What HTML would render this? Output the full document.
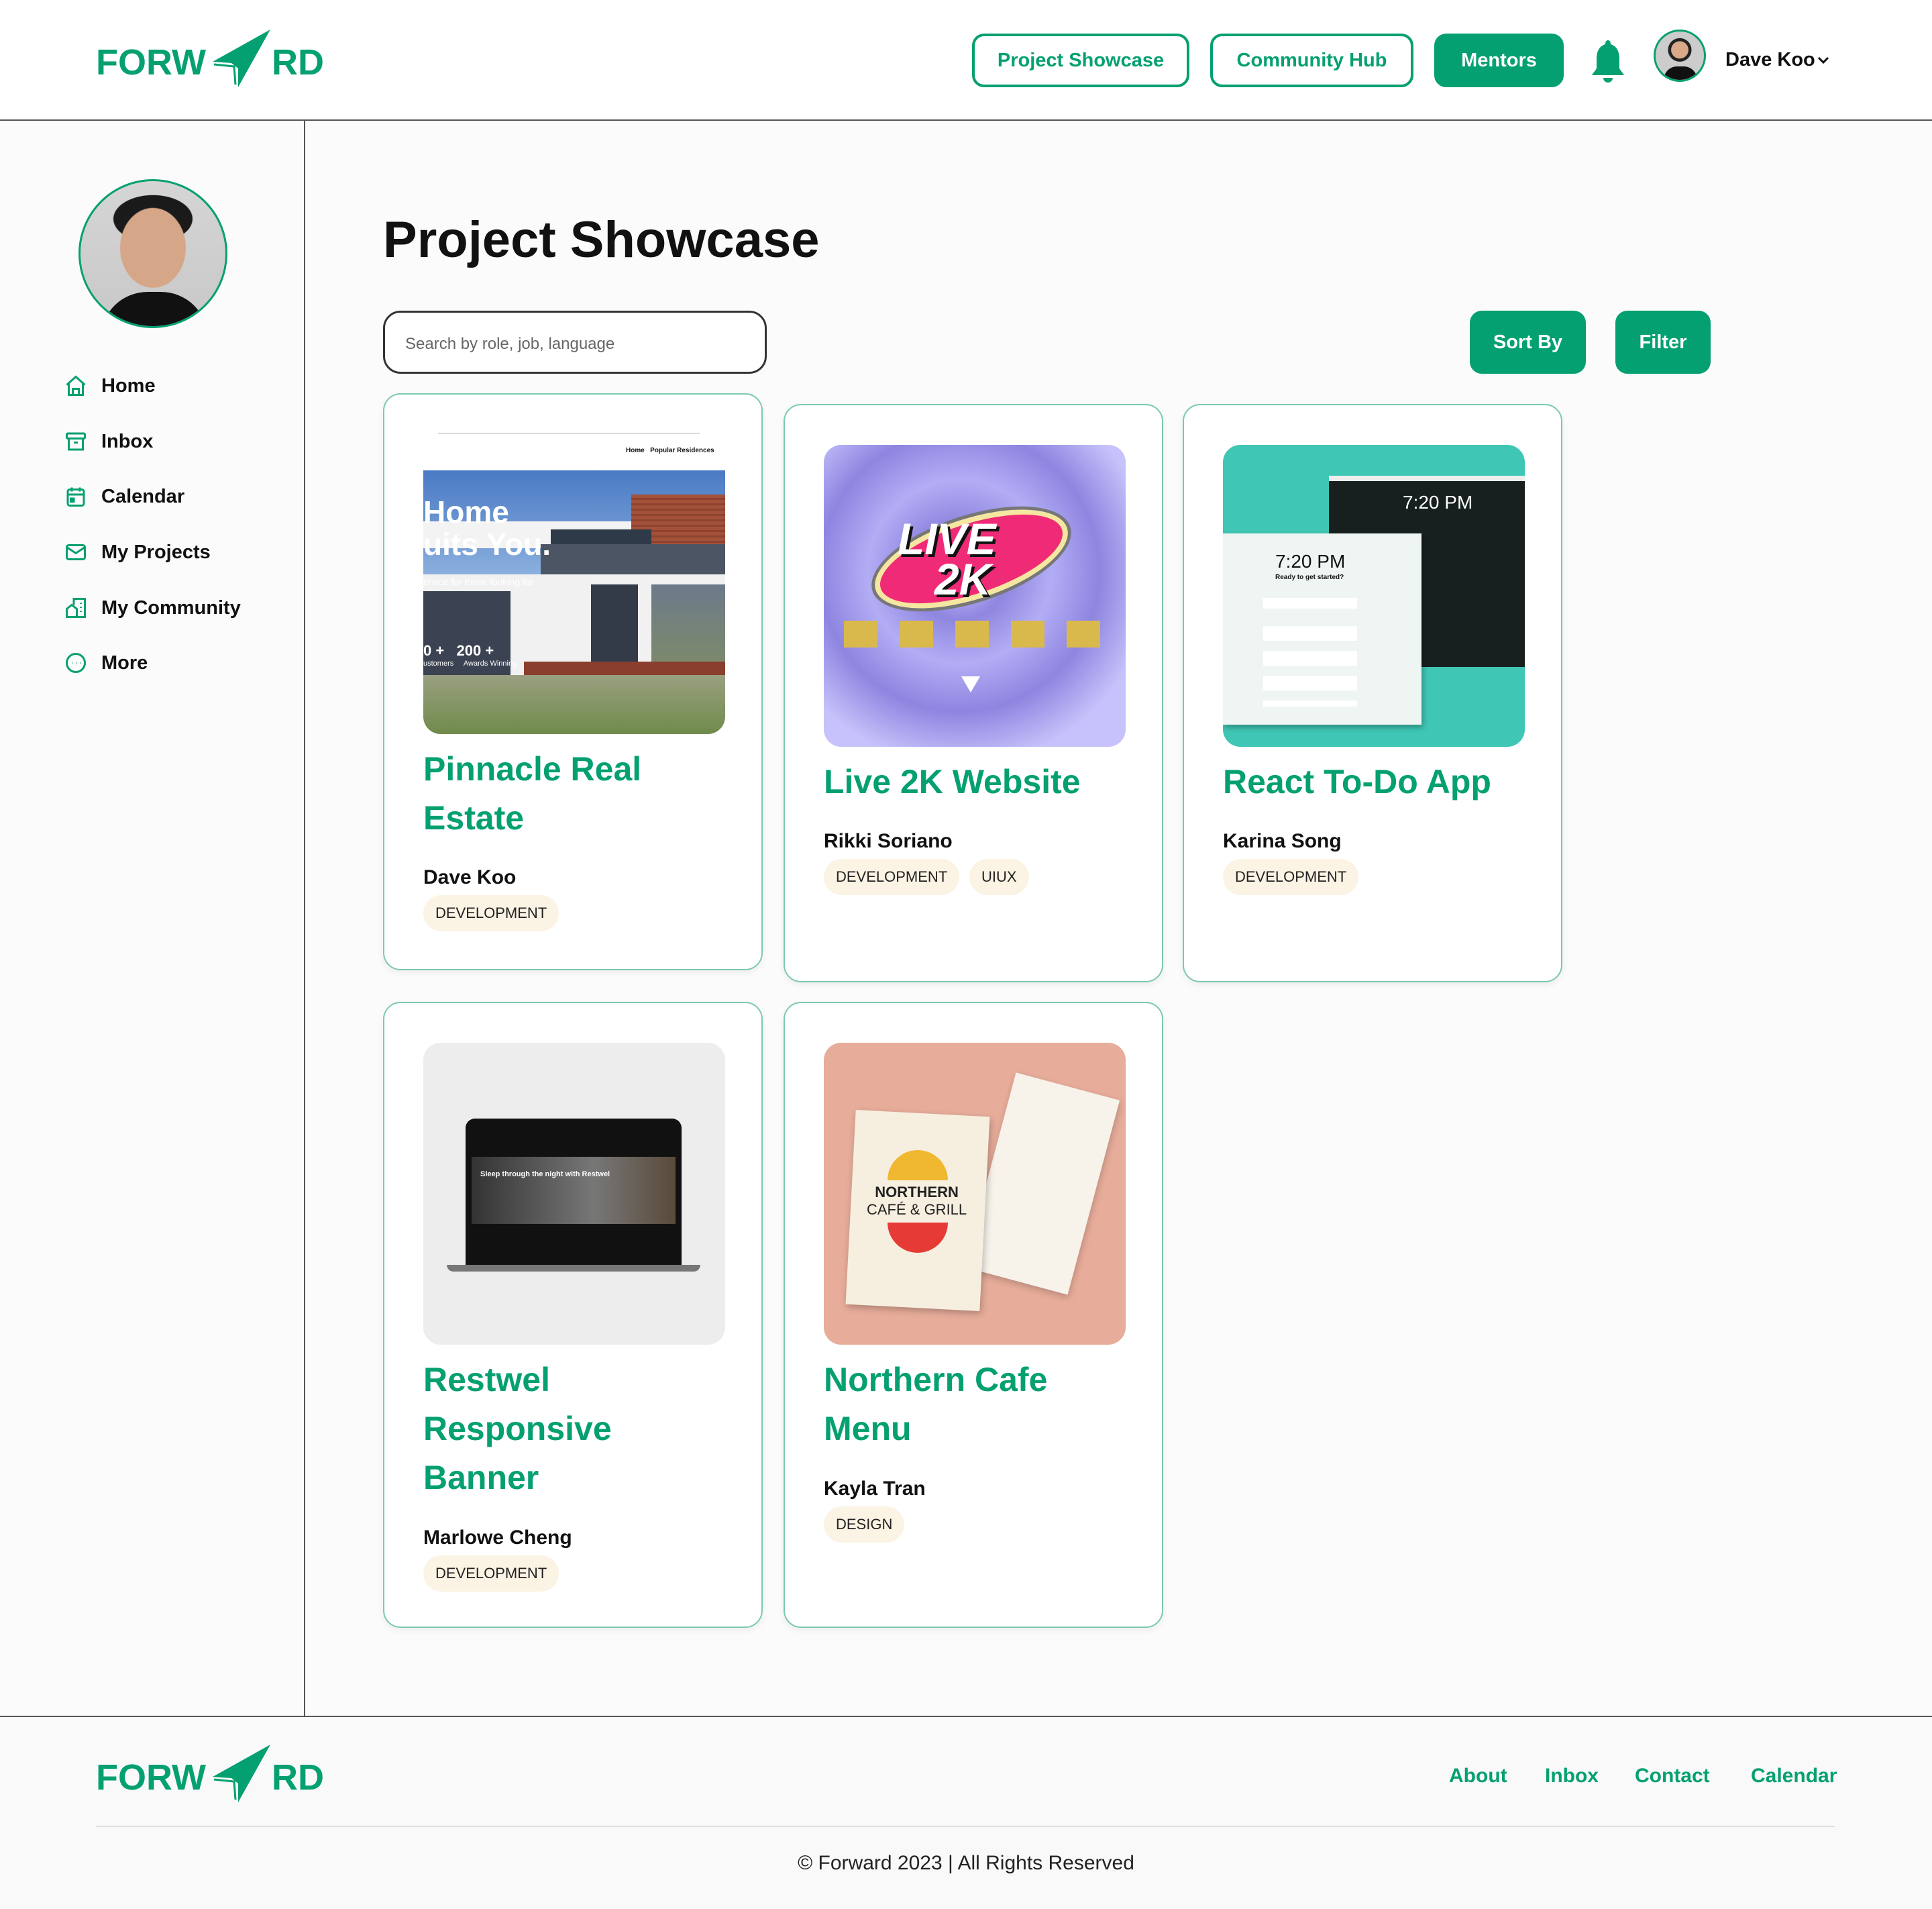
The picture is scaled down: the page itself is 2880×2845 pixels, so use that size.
<!DOCTYPE html>
<html><head><meta charset="utf-8">
<style>
*{box-sizing:border-box;margin:0;padding:0}
body{width:2880px;height:2845px;position:relative;background:#fbfbfb;font-family:"Liberation Sans",sans-serif;color:#111;overflow:hidden}
.a{position:absolute}
.g{color:#05a071}
.logo{position:absolute;height:90px;width:340px}
.logo span{position:absolute;top:18px;font-weight:bold;font-size:54px;color:#05a071;letter-spacing:0}
.btn{position:absolute;border:4px solid #05a071;border-radius:18px;color:#05a071;font-weight:bold;font-size:29px;display:flex;align-items:center;justify-content:center}
.fill{background:#05a071;color:#fff}
.nav{position:absolute;left:95px;display:flex;align-items:center;font-size:29px;font-weight:bold;color:#111}
.nav svg{width:36px;height:36px;margin-right:20px}
.card{position:absolute;background:#fff;border:2px solid #7cc9ad;border-radius:26px;box-shadow:0 4px 10px rgba(0,0,0,.06)}
.img{position:absolute;left:58px;width:450px;height:450px;border-radius:26px;overflow:hidden}
.t{position:absolute;left:58px;font-size:50px;font-weight:bold;color:#05a071;line-height:73px}
.n{position:absolute;left:58px;font-size:30px;font-weight:bold;color:#111}
.tag{position:absolute;height:54px;border-radius:27px;background:#fbf3e4;font-size:22px;display:flex;align-items:center;padding:0 18px;color:#222}
</style></head><body>
<div class="a" style="left:0;top:0;width:2880px;height:180px;background:#fff;border-bottom:2px solid #555"></div>
<div class="logo" style="left:143px;top:44px">
<span style="left:0">FORW</span>
<svg class="a" style="left:172px;top:0" width="90" height="90" viewBox="0 0 90 90"><path d="M88 0 L2 48 L30 50 Z M30 50 L88 0 L40 86 L40 58 Z" fill="#05a071"/><path d="M4 52 L34 55 L36 82" stroke="#05a071" stroke-width="3" fill="none"/></svg>
<span style="left:262px">RD</span>
</div>
<div class="btn" style="left:1449px;top:50px;width:324px;height:80px">Project Showcase</div>
<div class="btn" style="left:1804px;top:50px;width:303px;height:80px">Community Hub</div>
<div class="btn fill" style="left:2138px;top:50px;width:193px;height:80px">Mentors</div>
<svg class="a" style="left:2372px;top:58px" width="50" height="66" viewBox="0 0 50 66"><path d="M25 2 C28 2 29 5 29 8 C39 11 42 20 42 30 L42 44 L49 54 L1 54 L8 44 L8 30 C8 20 11 11 21 8 C21 5 22 2 25 2Z" fill="#05a071"/><path d="M18 58 h14 a7 7 0 0 1 -14 0z" fill="#05a071"/></svg>
<div class="a" style="left:2465px;top:44px;width:78px;height:78px;border-radius:50%;border:3px solid #05a071;background:radial-gradient(circle at 50% 38%,#d9a98a 0 22%,#222 23% 30%,#ccc 31%);overflow:hidden"><div class="a" style="left:12px;top:52px;width:50px;height:30px;border-radius:20px 20px 0 0;background:#111"></div></div>
<div class="a" style="left:2572px;top:73px;font-size:29px;font-weight:bold">Dave Koo</div>
<svg class="a" style="left:2708px;top:82px" width="20" height="16" viewBox="0 0 20 16"><path d="M3 4 L10 11 L17 4" stroke="#111" stroke-width="3" fill="none"/></svg>

<div class="a" style="left:453px;top:180px;width:2px;height:2378px;background:#555"></div>
<div class="a" style="left:117px;top:267px;width:222px;height:222px;border-radius:50%;border:3px solid #05a071;background:radial-gradient(ellipse 28% 34% at 50% 46%,#d6a688 0 80%,transparent 82%),radial-gradient(ellipse 30% 18% at 50% 26%,#1a1a1a 0 90%,transparent 92%),linear-gradient(#d5d5d5,#c8c8c8);overflow:hidden"><div class="a" style="left:30px;top:165px;width:160px;height:80px;border-radius:70px 70px 0 0;background:#111"></div></div>

<div class="nav" style="top:557px"><svg viewBox="0 0 24 24" fill="none" stroke="#05a071" stroke-width="2"><path d="M3 11 L12 3 L21 11 M5 9 V21 H19 V9 M9 21 V15 H15 V21"/></svg>Home</div>
<div class="nav" style="top:640px;left:95px"><svg viewBox="0 0 24 24" fill="none" stroke="#05a071" stroke-width="2"><rect x="3" y="4" width="18" height="5" rx="1"/><path d="M5 9 V20 H19 V9 M10 13 H14"/></svg>Inbox</div>
<div class="nav" style="top:722px"><svg viewBox="0 0 24 24" fill="none" stroke="#05a071" stroke-width="2"><rect x="4" y="5" width="16" height="16" rx="2"/><path d="M4 10 H20 M8 3 V7 M16 3 V7"/><rect x="7" y="14" width="3" height="3" fill="#05a071"/></svg>Calendar</div>
<div class="nav" style="top:805px"><svg viewBox="0 0 24 24" fill="none" stroke="#05a071" stroke-width="2"><rect x="3" y="5" width="18" height="14" rx="2"/><path d="M3 7 L12 13 L21 7"/></svg>My Projects</div>
<div class="nav" style="top:888px"><svg viewBox="0 0 24 24" fill="none" stroke="#05a071" stroke-width="2"><path d="M3 21 V13 L8 9 L13 13 V21 Z M10 9 V3 H21 V21 H13 M17 7 v1 M17 11 v1 M17 15 v1"/></svg>My Community</div>
<div class="nav" style="top:970px"><svg viewBox="0 0 24 24" fill="none" stroke="#05a071" stroke-width="2"><circle cx="12" cy="12" r="9"/><path d="M8 12h.5M12 12h.5M16 12h.5"/></svg>More</div>

<div class="a" style="left:571px;top:314px;font-size:76px;font-weight:bold;color:#111">Project Showcase</div>
<div class="a" style="left:571px;top:463px;width:572px;height:94px;border:3px solid #333;border-radius:26px;background:#fff;font-size:24px;color:#666;padding:33px 0 0 30px">Search by role, job, language</div>
<div class="btn fill" style="left:2191px;top:463px;width:173px;height:94px">Sort By</div>
<div class="btn fill" style="left:2408px;top:463px;width:142px;height:94px">Filter</div>

<!-- card1 -->
<div class="card" style="left:571px;top:586px;width:566px;height:860px">
<div class="a" style="left:80px;top:57px;width:390px;height:1px;background:#aaa"></div>
<div class="a" style="left:360px;top:78px;font-size:10px;font-weight:bold">Home &nbsp; Popular Residences</div>
<div class="img" style="top:113px;height:393px;border-radius:0 0 26px 26px;background:linear-gradient(#4a7ac4,#8bb0de 40%,transparent 40%),#eee">
<div class="a" style="left:310px;top:36px;width:140px;height:80px;background:repeating-linear-gradient(#a4513a 0 5px,#8e4330 5px 8px)"></div>
<div class="a" style="left:0;top:76px;width:310px;height:40px;background:#f3f3f3"></div>
<div class="a" style="left:175px;top:110px;width:275px;height:45px;background:#4b5563"></div>
<div class="a" style="left:190px;top:88px;width:150px;height:22px;background:#2f3a48"></div>
<div class="a" style="left:0;top:155px;width:450px;height:150px;background:#f1f1f1"></div>
<div class="a" style="left:0;top:180px;width:130px;height:125px;background:#3b4252"></div>
<div class="a" style="left:250px;top:170px;width:70px;height:130px;background:#333b48"></div>
<div class="a" style="left:340px;top:170px;width:110px;height:125px;background:linear-gradient(#6c7a8a,#7d8a6a)"></div>
<div class="a" style="left:150px;top:285px;width:300px;height:25px;background:#8a3e2d"></div>
<div class="a" style="left:0;top:305px;width:450px;height:90px;background:linear-gradient(#9aa080,#6e8a4a)"></div>
<div class="a" style="left:0;top:38px;color:#fff;font-size:46px;font-weight:bold;line-height:48px">Home<br>uits You.</div>
<div class="a" style="left:0;top:158px;color:#fff;font-size:14px">ervice for those looking for</div>
<div class="a" style="left:0;top:256px;color:#fff;font-size:22px;font-weight:bold">0 +&nbsp;&nbsp;&nbsp;200 +</div>
<div class="a" style="left:0;top:282px;color:#fff;font-size:11px">ustomers &nbsp;&nbsp;&nbsp; Awards Winning</div>
</div>
<div class="t" style="top:522px">Pinnacle Real<br>Estate</div>
<div class="n" style="top:703px">Dave Koo</div>
<div class="tag" style="left:58px;top:746px">DEVELOPMENT</div>
</div>

<!-- card2 -->
<div class="card" style="left:1168px;top:602px;width:566px;height:862px">
<div class="img" style="top:59px;background:radial-gradient(circle at 45% 42%,#b4aef3 0 8%,#8f86df 20%,#b3adf5 38%,#8e85e0 58%,#c7c2fb 80%)">
<div class="a" style="left:70px;top:110px;width:300px;height:120px;border-radius:50%;background:#ef2b77;border:8px solid #f5e7a0;outline:5px solid #777;transform:rotate(-18deg)"></div>
<div class="a" style="left:110px;top:110px;color:#fff;font-size:66px;font-weight:bold;font-style:italic;text-shadow:4px 4px 0 #111;line-height:60px">LIVE<br>&nbsp;&nbsp;&nbsp;2K</div>
<div class="a" style="left:30px;top:262px;width:390px;height:40px;background:repeating-linear-gradient(90deg,#d9b94c 0 50px,transparent 50px 83px)"></div>
<div class="a" style="left:205px;top:345px;width:0;height:0;border-left:14px solid transparent;border-right:14px solid transparent;border-top:24px solid #fff"></div>
</div>
<div class="t" style="top:525px">Live 2K Website</div>
<div class="n" style="top:633px">Rikki Soriano</div>
<div class="tag" style="left:58px;top:676px">DEVELOPMENT</div>
<div class="tag" style="left:275px;top:676px">UIUX</div>
</div>

<!-- card3 -->
<div class="card" style="left:1763px;top:602px;width:566px;height:862px">
<div class="img" style="top:59px;background:#3fc6b4">
<div class="a" style="left:158px;top:46px;width:292px;height:285px;background:#17201f;border-top:8px solid #eee"></div>
<div class="a" style="left:268px;top:70px;color:#fff;font-size:28px">7:20 PM</div>
<div class="a" style="left:0;top:132px;width:296px;height:285px;background:#eef5f3;box-shadow:2px 4px 8px rgba(0,0,0,.3)"></div>
<div class="a" style="left:78px;top:158px;color:#111;font-size:28px">7:20 PM</div>
<div class="a" style="left:78px;top:192px;color:#111;font-size:10px;font-weight:bold">Ready to get started?</div>
<div class="a" style="left:60px;top:228px;width:140px;height:16px;background:#fff"></div>
<div class="a" style="left:60px;top:270px;width:140px;height:120px;background:repeating-linear-gradient(#fff 0 22px,transparent 22px 37px)"></div>
</div>
<div class="t" style="top:525px">React To-Do App</div>
<div class="n" style="top:633px">Karina Song</div>
<div class="tag" style="left:58px;top:676px">DEVELOPMENT</div>
</div>

<!-- card4 -->
<div class="card" style="left:571px;top:1493px;width:566px;height:933px">
<div class="img" style="top:59px;background:#ededed">
<div class="a" style="left:63px;top:113px;width:322px;height:218px;background:#111;border-radius:14px 14px 0 0"></div>
<div class="a" style="left:72px;top:170px;width:304px;height:100px;background:linear-gradient(90deg,#333,#777 60%,#5a4a3a)"></div>
<div class="a" style="left:85px;top:190px;color:#fff;font-size:11px;font-weight:bold">Sleep through the night with Restwel</div>
<div class="a" style="left:35px;top:331px;width:378px;height:10px;background:#777;border-radius:0 0 10px 10px"></div>
</div>
<div class="t" style="top:525px">Restwel<br>Responsive<br>Banner</div>
<div class="n" style="top:780px">Marlowe Cheng</div>
<div class="tag" style="left:58px;top:823px">DEVELOPMENT</div>
</div>

<!-- card5 -->
<div class="card" style="left:1168px;top:1493px;width:566px;height:933px">
<div class="img" style="top:59px;background:#e7ac9a">
<div class="a" style="left:245px;top:60px;width:160px;height:300px;background:#f7f2ea;transform:rotate(15deg);box-shadow:2px 4px 10px rgba(0,0,0,.2)"></div>
<div class="a" style="left:40px;top:105px;width:200px;height:290px;background:#f6efdf;transform:rotate(3deg);box-shadow:2px 4px 10px rgba(0,0,0,.25)"></div>
<div class="a" style="left:95px;top:160px;width:90px;height:45px;border-radius:45px 45px 0 0;background:#f0b830"></div>
<div class="a" style="left:64px;top:210px;font-size:22px;font-weight:bold;color:#222;line-height:26px;text-align:center">NORTHERN<br><span style="font-weight:normal">CAFÉ &amp; GRILL</span></div>
<div class="a" style="left:95px;top:268px;width:90px;height:45px;border-radius:0 0 45px 45px;background:#e63a36"></div>
</div>
<div class="t" style="top:525px">Northern Cafe<br>Menu</div>
<div class="n" style="top:707px">Kayla Tran</div>
<div class="tag" style="left:58px;top:750px">DESIGN</div>
</div>

<!-- footer -->
<div class="a" style="left:0;top:2557px;width:2880px;height:288px;background:#f9f9f9;border-top:2px solid #555"></div>
<div class="logo" style="left:143px;top:2600px">
<span style="left:0">FORW</span>
<svg class="a" style="left:172px;top:0" width="90" height="90" viewBox="0 0 90 90"><path d="M88 0 L2 48 L30 50 Z M30 50 L88 0 L40 86 L40 58 Z" fill="#05a071"/><path d="M4 52 L34 55 L36 82" stroke="#05a071" stroke-width="3" fill="none"/></svg>
<span style="left:262px">RD</span>
</div>
<div class="a g" style="left:2160px;top:2630px;font-size:30px;font-weight:bold">About</div>
<div class="a g" style="left:2303px;top:2630px;font-size:30px;font-weight:bold">Inbox</div>
<div class="a g" style="left:2437px;top:2630px;font-size:30px;font-weight:bold">Contact</div>
<div class="a g" style="left:2610px;top:2630px;font-size:30px;font-weight:bold">Calendar</div>
<div class="a" style="left:143px;top:2721px;width:2592px;height:2px;background:#ddd"></div>
<div class="a" style="left:0;top:2760px;width:2880px;text-align:center;font-size:30px;color:#222">© Forward 2023 | All Rights Reserved</div>
</body></html>
